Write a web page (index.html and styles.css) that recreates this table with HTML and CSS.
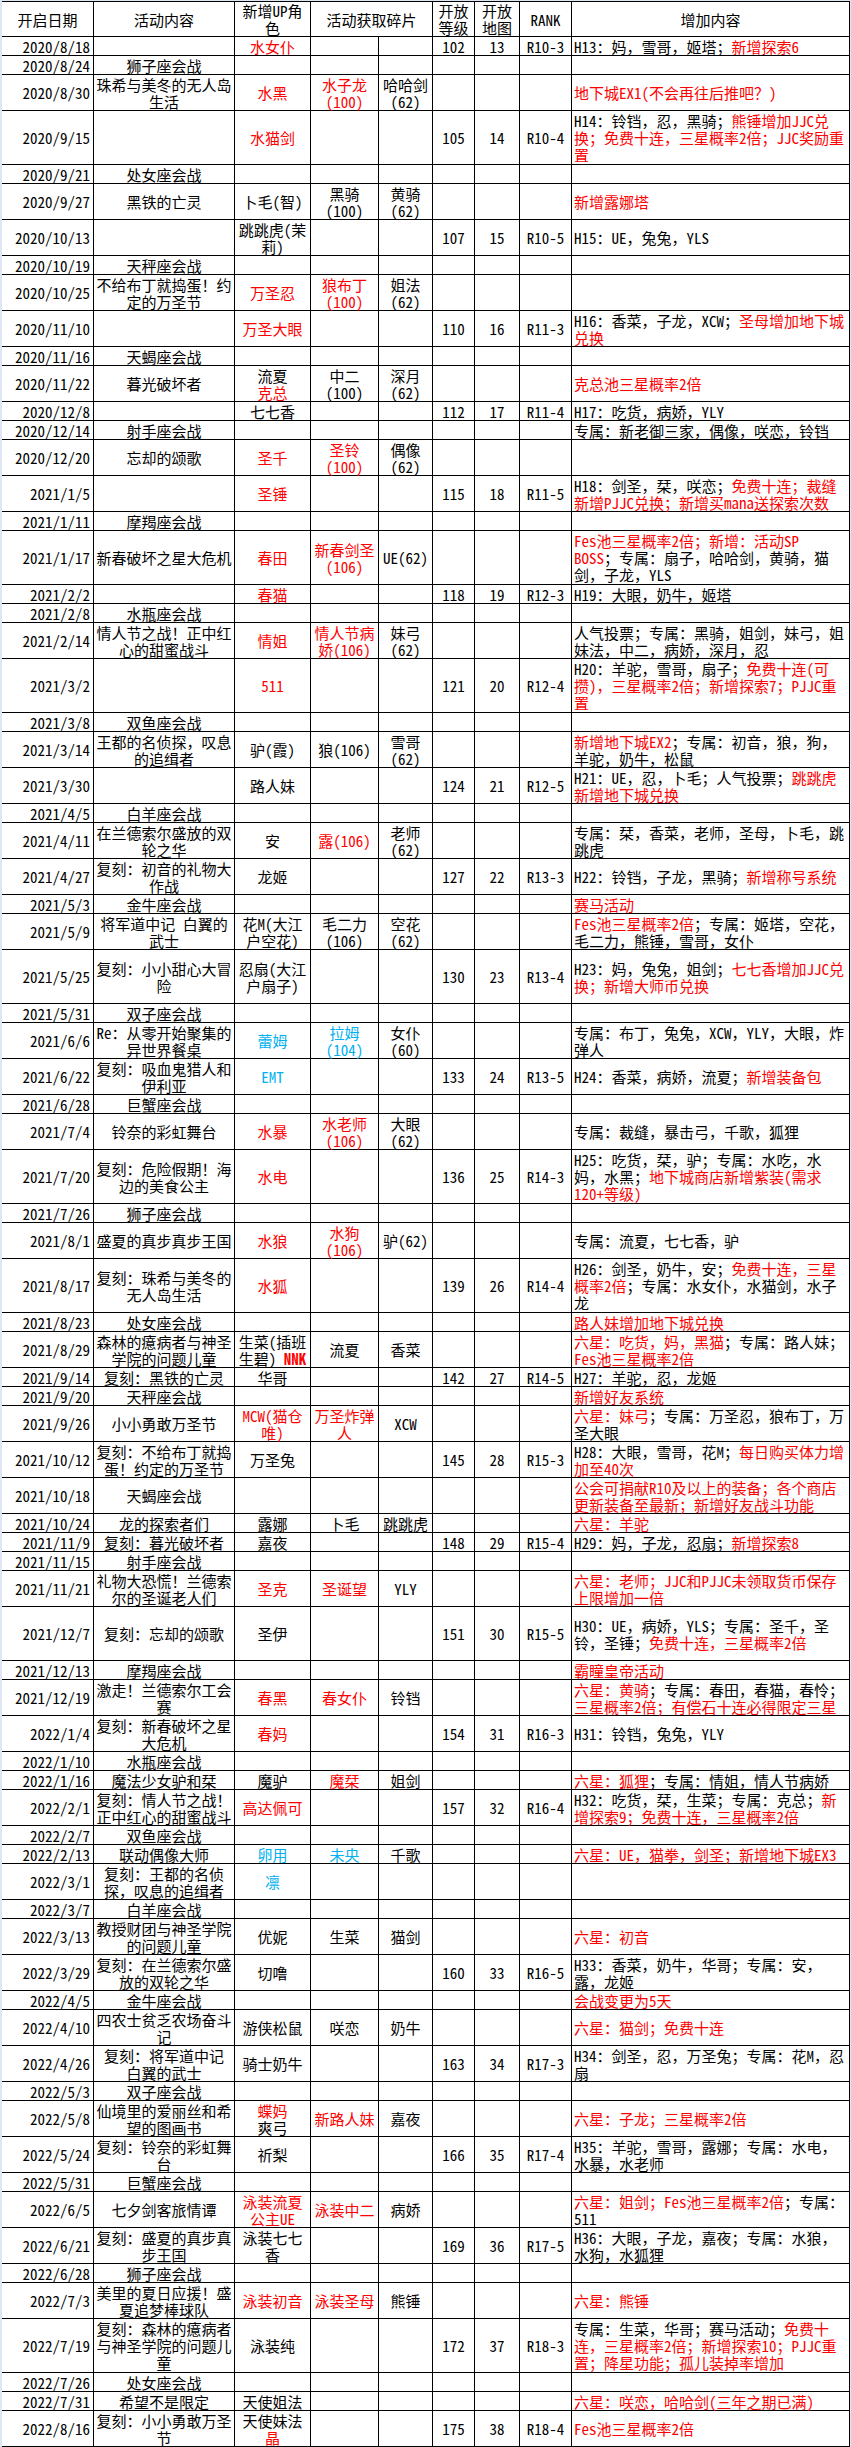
FILE: index.html
```html
<!DOCTYPE html>
<html lang="zh-CN">
<head>
<meta charset="utf-8">
<title>活动时间表</title>
<link rel="stylesheet" href="styles.css">
</head>
<body>
<table class="sheet">
<colgroup>
<col class="w1"><col class="w2"><col class="w3"><col class="w4"><col class="w5"><col class="w6"><col class="w7"><col class="w8"><col class="w9">
</colgroup>
<thead>
<tr class="hd">
<th>开启日期</th><th>活动内容</th><th>新增UP角<br>色</th><th colspan="2">活动获取碎片</th><th>开放<br>等级</th><th>开放<br>地图</th><th>RANK</th><th>增加内容</th>
</tr>
</thead>
<tbody>
<tr class="s"><td>2020/8/18</td><td></td><td><span class="r">水女仆</span></td><td></td><td></td><td>102</td><td>13</td><td>R10-3</td><td>H13：妈，雪哥，姬塔；<span class="r">新增探索6</span></td></tr>
<tr class="s"><td>2020/8/24</td><td>狮子座会战</td><td></td><td></td><td></td><td></td><td></td><td></td><td></td></tr>
<tr class="d"><td>2020/8/30</td><td>珠希与美冬的无人岛<br>生活</td><td><span class="r">水黑</span></td><td><span class="r">水子龙<br>(100)</span></td><td>哈哈剑<br>(62)</td><td></td><td></td><td></td><td><span class="r">地下城EX1(不会再往后推吧？)</span></td></tr>
<tr class="t"><td>2020/9/15</td><td></td><td><span class="r">水猫剑</span></td><td></td><td></td><td>105</td><td>14</td><td>R10-4</td><td>H14：铃铛，忍，黑骑；<span class="r">熊锤增加JJC兑<br>换；免费十连，三星概率2倍；JJC奖励重<br>置</span></td></tr>
<tr class="s"><td>2020/9/21</td><td>处女座会战</td><td></td><td></td><td></td><td></td><td></td><td></td><td></td></tr>
<tr class="d"><td>2020/9/27</td><td>黑铁的亡灵</td><td>卜毛(智)</td><td>黑骑<br>(100)</td><td>黄骑<br>(62)</td><td></td><td></td><td></td><td><span class="r">新增露娜塔</span></td></tr>
<tr class="d"><td>2020/10/13</td><td></td><td>跳跳虎(茉<br>莉)</td><td></td><td></td><td>107</td><td>15</td><td>R10-5</td><td>H15：UE，兔兔，YLS</td></tr>
<tr class="s"><td>2020/10/19</td><td>天秤座会战</td><td></td><td></td><td></td><td></td><td></td><td></td><td></td></tr>
<tr class="d"><td>2020/10/25</td><td>不给布丁就捣蛋！约<br>定的万圣节</td><td><span class="r">万圣忍</span></td><td><span class="r">狼布丁<br>(100)</span></td><td>姐法<br>(62)</td><td></td><td></td><td></td><td></td></tr>
<tr class="d"><td>2020/11/10</td><td></td><td><span class="r">万圣大眼</span></td><td></td><td></td><td>110</td><td>16</td><td>R11-3</td><td>H16：香菜，子龙，XCW；<span class="r">圣母增加地下城<br>兑换</span></td></tr>
<tr class="s"><td>2020/11/16</td><td>天蝎座会战</td><td></td><td></td><td></td><td></td><td></td><td></td><td></td></tr>
<tr class="d"><td>2020/11/22</td><td>暮光破坏者</td><td>流夏<br><span class="r">克总</span></td><td>中二<br>(100)</td><td>深月<br>(62)</td><td></td><td></td><td></td><td><span class="r">克总池三星概率2倍</span></td></tr>
<tr class="s"><td>2020/12/8</td><td></td><td>七七香</td><td></td><td></td><td>112</td><td>17</td><td>R11-4</td><td>H17：吃货，病娇，YLY</td></tr>
<tr class="s"><td>2020/12/14</td><td>射手座会战</td><td></td><td></td><td></td><td></td><td></td><td></td><td>专属：新老御三家，偶像，咲恋，铃铛</td></tr>
<tr class="d"><td>2020/12/20</td><td>忘却的颂歌</td><td><span class="r">圣千</span></td><td><span class="r">圣铃<br>(100)</span></td><td>偶像<br>(62)</td><td></td><td></td><td></td><td></td></tr>
<tr class="d"><td>2021/1/5</td><td></td><td><span class="r">圣锤</span></td><td></td><td></td><td>115</td><td>18</td><td>R11-5</td><td>H18：剑圣，栞，咲恋；<span class="r">免费十连；裁缝<br>新增PJJC兑换；新增买mana送探索次数</span></td></tr>
<tr class="s"><td>2021/1/11</td><td>摩羯座会战</td><td></td><td></td><td></td><td></td><td></td><td></td><td></td></tr>
<tr class="t"><td>2021/1/17</td><td>新春破坏之星大危机</td><td><span class="r">春田</span></td><td><span class="r">新春剑圣<br>(106)</span></td><td>UE(62)</td><td></td><td></td><td></td><td><span class="r">Fes池三星概率2倍；新增：活动SP<br>BOSS</span>；专属：扇子，哈哈剑，黄骑，猫<br>剑，子龙，YLS</td></tr>
<tr class="s"><td>2021/2/2</td><td></td><td><span class="r">春猫</span></td><td></td><td></td><td>118</td><td>19</td><td>R12-3</td><td>H19：大眼，奶牛，姬塔</td></tr>
<tr class="s"><td>2021/2/8</td><td>水瓶座会战</td><td></td><td></td><td></td><td></td><td></td><td></td><td></td></tr>
<tr class="d"><td>2021/2/14</td><td>情人节之战！正中红<br>心的甜蜜战斗</td><td><span class="r">情姐</span></td><td><span class="r">情人节病<br>娇(106)</span></td><td>妹弓<br>(62)</td><td></td><td></td><td></td><td>人气投票；专属：黑骑，姐剑，妹弓，姐<br>妹法，中二，病娇，深月，忍</td></tr>
<tr class="t"><td>2021/3/2</td><td></td><td><span class="r">511</span></td><td></td><td></td><td>121</td><td>20</td><td>R12-4</td><td>H20：羊驼，雪哥，扇子；<span class="r">免费十连(可<br>攒)，三星概率2倍；新增探索7；PJJC重<br>置</span></td></tr>
<tr class="s"><td>2021/3/8</td><td>双鱼座会战</td><td></td><td></td><td></td><td></td><td></td><td></td><td></td></tr>
<tr class="d"><td>2021/3/14</td><td>王都的名侦探，叹息<br>的追缉者</td><td>驴(霞)</td><td>狼(106)</td><td>雪哥<br>(62)</td><td></td><td></td><td></td><td><span class="r">新增地下城EX2</span>；专属：初音，狼，狗，<br>羊驼，奶牛，松鼠</td></tr>
<tr class="d"><td>2021/3/30</td><td></td><td>路人妹</td><td></td><td></td><td>124</td><td>21</td><td>R12-5</td><td>H21：UE，忍，卜毛；人气投票；<span class="r">跳跳虎<br>新增地下城兑换</span></td></tr>
<tr class="s"><td>2021/4/5</td><td>白羊座会战</td><td></td><td></td><td></td><td></td><td></td><td></td><td></td></tr>
<tr class="d"><td>2021/4/11</td><td>在兰德索尔盛放的双<br>轮之华</td><td>安</td><td><span class="r">露(106)</span></td><td>老师<br>(62)</td><td></td><td></td><td></td><td>专属：栞，香菜，老师，圣母，卜毛，跳<br>跳虎</td></tr>
<tr class="d"><td>2021/4/27</td><td>复刻：初音的礼物大<br>作战</td><td>龙姬</td><td></td><td></td><td>127</td><td>22</td><td>R13-3</td><td>H22：铃铛，子龙，黑骑；<span class="r">新增称号系统</span></td></tr>
<tr class="s"><td>2021/5/3</td><td>金牛座会战</td><td></td><td></td><td></td><td></td><td></td><td></td><td><span class="r">赛马活动</span></td></tr>
<tr class="d"><td>2021/5/9</td><td>将军道中记 白翼的<br>武士</td><td>花M(大江<br>户空花)</td><td>毛二力<br>(106)</td><td>空花<br>(62)</td><td></td><td></td><td></td><td><span class="r">Fes池三星概率2倍</span>；专属：姬塔，空花，<br>毛二力，熊锤，雪哥，女仆</td></tr>
<tr class="t"><td>2021/5/25</td><td>复刻：小小甜心大冒<br>险</td><td>忍扇(大江<br>户扇子)</td><td></td><td></td><td>130</td><td>23</td><td>R13-4</td><td>H23：妈，兔兔，姐剑；<span class="r">七七香增加JJC兑<br>换；新增大师币兑换</span></td></tr>
<tr class="s"><td>2021/5/31</td><td>双子座会战</td><td></td><td></td><td></td><td></td><td></td><td></td><td></td></tr>
<tr class="d"><td>2021/6/6</td><td>Re：从零开始聚集的<br>异世界餐桌</td><td><span class="b">蕾姆</span></td><td><span class="b">拉姆<br>(104)</span></td><td>女仆<br>(60)</td><td></td><td></td><td></td><td>专属：布丁，兔兔，XCW，YLY，大眼，炸<br>弹人</td></tr>
<tr class="d"><td>2021/6/22</td><td>复刻：吸血鬼猎人和<br>伊利亚</td><td><span class="b">EMT</span></td><td></td><td></td><td>133</td><td>24</td><td>R13-5</td><td>H24：香菜，病娇，流夏；<span class="r">新增装备包</span></td></tr>
<tr class="s"><td>2021/6/28</td><td>巨蟹座会战</td><td></td><td></td><td></td><td></td><td></td><td></td><td></td></tr>
<tr class="d"><td>2021/7/4</td><td>铃奈的彩虹舞台</td><td><span class="r">水暴</span></td><td><span class="r">水老师<br>(106)</span></td><td>大眼<br>(62)</td><td></td><td></td><td></td><td>专属：裁缝，暴击弓，千歌，狐狸</td></tr>
<tr class="t"><td>2021/7/20</td><td>复刻：危险假期！海<br>边的美食公主</td><td><span class="r">水电</span></td><td></td><td></td><td>136</td><td>25</td><td>R14-3</td><td>H25：吃货，栞，驴；专属：水吃，水<br>妈，水黑；<span class="r">地下城商店新增紫装(需求<br>120+等级)</span></td></tr>
<tr class="s"><td>2021/7/26</td><td>狮子座会战</td><td></td><td></td><td></td><td></td><td></td><td></td><td></td></tr>
<tr class="d"><td>2021/8/1</td><td>盛夏的真步真步王国</td><td><span class="r">水狼</span></td><td><span class="r">水狗<br>(106)</span></td><td>驴(62)</td><td></td><td></td><td></td><td>专属：流夏，七七香，驴</td></tr>
<tr class="t"><td>2021/8/17</td><td>复刻：珠希与美冬的<br>无人岛生活</td><td><span class="r">水狐</span></td><td></td><td></td><td>139</td><td>26</td><td>R14-4</td><td>H26：剑圣，奶牛，安；<span class="r">免费十连，三星<br>概率2倍</span>；专属：水女仆，水猫剑，水子<br>龙</td></tr>
<tr class="s"><td>2021/8/23</td><td>处女座会战</td><td></td><td></td><td></td><td></td><td></td><td></td><td><span class="r">路人妹增加地下城兑换</span></td></tr>
<tr class="d"><td>2021/8/29</td><td>森林的癔病者与神圣<br>学院的问题儿童</td><td>生菜(插班<br>生碧) <span class="r nb">NNK</span></td><td>流夏</td><td>香菜</td><td></td><td></td><td></td><td><span class="r">六星：吃货，妈，黑猫</span>；专属：路人妹；<br><span class="r">Fes池三星概率2倍</span></td></tr>
<tr class="s"><td>2021/9/14</td><td>复刻：黑铁的亡灵</td><td>华哥</td><td></td><td></td><td>142</td><td>27</td><td>R14-5</td><td>H27：羊驼，忍，龙姬</td></tr>
<tr class="s"><td>2021/9/20</td><td>天秤座会战</td><td></td><td></td><td></td><td></td><td></td><td></td><td><span class="r">新增好友系统</span></td></tr>
<tr class="d"><td>2021/9/26</td><td>小小勇敢万圣节</td><td><span class="r">MCW(猫仓<br>唯)</span></td><td><span class="r">万圣炸弹<br>人</span></td><td>XCW</td><td></td><td></td><td></td><td><span class="r">六星：妹弓</span>；专属：万圣忍，狼布丁，万<br>圣大眼</td></tr>
<tr class="d"><td>2021/10/12</td><td>复刻：不给布丁就捣<br>蛋！约定的万圣节</td><td>万圣兔</td><td></td><td></td><td>145</td><td>28</td><td>R15-3</td><td>H28：大眼，雪哥，花M；<span class="r">每日购买体力增<br>加至40次</span></td></tr>
<tr class="d"><td>2021/10/18</td><td>天蝎座会战</td><td></td><td></td><td></td><td></td><td></td><td></td><td><span class="r">公会可捐献R10及以上的装备；各个商店<br>更新装备至最新；新增好友战斗功能</span></td></tr>
<tr class="s"><td>2021/10/24</td><td>龙的探索者们</td><td>露娜</td><td>卜毛</td><td>跳跳虎</td><td></td><td></td><td></td><td><span class="r">六星：羊驼</span></td></tr>
<tr class="s"><td>2021/11/9</td><td>复刻：暮光破坏者</td><td>嘉夜</td><td></td><td></td><td>148</td><td>29</td><td>R15-4</td><td>H29：妈，子龙，忍扇；<span class="r">新增探索8</span></td></tr>
<tr class="s"><td>2021/11/15</td><td>射手座会战</td><td></td><td></td><td></td><td></td><td></td><td></td><td></td></tr>
<tr class="d"><td>2021/11/21</td><td>礼物大恐慌！兰德索<br>尔的圣诞老人们</td><td><span class="r">圣克</span></td><td><span class="r">圣诞望</span></td><td>YLY</td><td></td><td></td><td></td><td><span class="r">六星：老师；JJC和PJJC未领取货币保存<br>上限增加一倍</span></td></tr>
<tr class="t"><td>2021/12/7</td><td>复刻：忘却的颂歌</td><td>圣伊</td><td></td><td></td><td>151</td><td>30</td><td>R15-5</td><td>H30：UE，病娇，YLS；专属：圣千，圣<br>铃，圣锤；<span class="r">免费十连，三星概率2倍</span></td></tr>
<tr class="s"><td>2021/12/13</td><td>摩羯座会战</td><td></td><td></td><td></td><td></td><td></td><td></td><td><span class="r">霸瞳皇帝活动</span></td></tr>
<tr class="d"><td>2021/12/19</td><td>激走！兰德索尔工会<br>赛</td><td><span class="r">春黑</span></td><td><span class="r">春女仆</span></td><td>铃铛</td><td></td><td></td><td></td><td><span class="r">六星：黄骑</span>；专属：春田，春猫，春怜；<br><span class="r">三星概率2倍；有偿石十连必得限定三星</span></td></tr>
<tr class="d"><td>2022/1/4</td><td>复刻：新春破坏之星<br>大危机</td><td><span class="r">春妈</span></td><td></td><td></td><td>154</td><td>31</td><td>R16-3</td><td>H31：铃铛，兔兔，YLY</td></tr>
<tr class="s"><td>2022/1/10</td><td>水瓶座会战</td><td></td><td></td><td></td><td></td><td></td><td></td><td></td></tr>
<tr class="s"><td>2022/1/16</td><td>魔法少女驴和栞</td><td>魔驴</td><td><span class="r">魔栞</span></td><td>姐剑</td><td></td><td></td><td></td><td><span class="r">六星：狐狸</span>；专属：情姐，情人节病娇</td></tr>
<tr class="d"><td>2022/2/1</td><td>复刻：情人节之战！<br>正中红心的甜蜜战斗</td><td><span class="r">高达佩可</span></td><td></td><td></td><td>157</td><td>32</td><td>R16-4</td><td>H32：吃货，栞，生菜；专属：克总；<span class="r">新<br>增探索9；免费十连，三星概率2倍</span></td></tr>
<tr class="s"><td>2022/2/7</td><td>双鱼座会战</td><td></td><td></td><td></td><td></td><td></td><td></td><td></td></tr>
<tr class="s"><td>2022/2/13</td><td>联动偶像大师</td><td><span class="b">卵用</span></td><td><span class="b">未央</span></td><td>千歌</td><td></td><td></td><td></td><td><span class="r">六星：UE，猫拳，剑圣；新增地下城EX3</span></td></tr>
<tr class="d"><td>2022/3/1</td><td>复刻：王都的名侦<br>探，叹息的追缉者</td><td><span class="b">凛</span></td><td></td><td></td><td></td><td></td><td></td><td></td></tr>
<tr class="s"><td>2022/3/7</td><td>白羊座会战</td><td></td><td></td><td></td><td></td><td></td><td></td><td></td></tr>
<tr class="d"><td>2022/3/13</td><td>教授财团与神圣学院<br>的问题儿童</td><td>优妮</td><td>生菜</td><td>猫剑</td><td></td><td></td><td></td><td><span class="r">六星：初音</span></td></tr>
<tr class="d"><td>2022/3/29</td><td>复刻：在兰德索尔盛<br>放的双轮之华</td><td>切噜</td><td></td><td></td><td>160</td><td>33</td><td>R16-5</td><td>H33：香菜，奶牛，华哥；专属：安，<br>露，龙姬</td></tr>
<tr class="s"><td>2022/4/5</td><td>金牛座会战</td><td></td><td></td><td></td><td></td><td></td><td></td><td><span class="r">会战变更为5天</span></td></tr>
<tr class="d"><td>2022/4/10</td><td>四农士贫乏农场奋斗<br>记</td><td>游侠松鼠</td><td>咲恋</td><td>奶牛</td><td></td><td></td><td></td><td><span class="r">六星：猫剑；免费十连</span></td></tr>
<tr class="d"><td>2022/4/26</td><td>复刻：将军道中记<br>白翼的武士</td><td>骑士奶牛</td><td></td><td></td><td>163</td><td>34</td><td>R17-3</td><td>H34：剑圣，忍，万圣兔；专属：花M，忍<br>扇</td></tr>
<tr class="s"><td>2022/5/3</td><td>双子座会战</td><td></td><td></td><td></td><td></td><td></td><td></td><td></td></tr>
<tr class="d"><td>2022/5/8</td><td>仙境里的爱丽丝和希<br>望的图画书</td><td><span class="r">蝶妈</span><br>爽弓</td><td><span class="r">新路人妹</span></td><td>嘉夜</td><td></td><td></td><td></td><td><span class="r">六星：子龙；三星概率2倍</span></td></tr>
<tr class="d"><td>2022/5/24</td><td>复刻：铃奈的彩虹舞<br>台</td><td>祈梨</td><td></td><td></td><td>166</td><td>35</td><td>R17-4</td><td>H35：羊驼，雪哥，露娜；专属：水电，<br>水暴，水老师</td></tr>
<tr class="s"><td>2022/5/31</td><td>巨蟹座会战</td><td></td><td></td><td></td><td></td><td></td><td></td><td></td></tr>
<tr class="d"><td>2022/6/5</td><td>七夕剑客旅情谭</td><td><span class="r">泳装流夏<br>公主UE</span></td><td><span class="r">泳装中二</span></td><td>病娇</td><td></td><td></td><td></td><td><span class="r">六星：姐剑；Fes池三星概率2倍</span>；专属：<br>511</td></tr>
<tr class="d"><td>2022/6/21</td><td>复刻：盛夏的真步真<br>步王国</td><td>泳装七七<br>香</td><td></td><td></td><td>169</td><td>36</td><td>R17-5</td><td>H36：大眼，子龙，嘉夜；专属：水狼，<br>水狗，水狐狸</td></tr>
<tr class="s"><td>2022/6/28</td><td>狮子座会战</td><td></td><td></td><td></td><td></td><td></td><td></td><td></td></tr>
<tr class="d"><td>2022/7/3</td><td>美里的夏日应援！盛<br>夏追梦棒球队</td><td><span class="r">泳装初音</span></td><td><span class="r">泳装圣母</span></td><td>熊锤</td><td></td><td></td><td></td><td><span class="r">六星：熊锤</span></td></tr>
<tr class="t"><td>2022/7/19</td><td>复刻：森林的癔病者<br>与神圣学院的问题儿<br>童</td><td>泳装纯</td><td></td><td></td><td>172</td><td>37</td><td>R18-3</td><td>专属：生菜，华哥；赛马活动；<span class="r">免费十<br>连，三星概率2倍；新增探索10；PJJC重<br>置；降星功能；孤儿装掉率增加</span></td></tr>
<tr class="s"><td>2022/7/26</td><td>处女座会战</td><td></td><td></td><td></td><td></td><td></td><td></td><td></td></tr>
<tr class="s"><td>2022/7/31</td><td>希望不是限定</td><td>天使姐法</td><td></td><td></td><td></td><td></td><td></td><td><span class="r">六星：咲恋，哈哈剑(三年之期已满)</span></td></tr>
<tr class="d"><td>2022/8/16</td><td>复刻：小小勇敢万圣<br>节</td><td>天使妹法<br><span class="r">晶</span></td><td></td><td></td><td>175</td><td>38</td><td>R18-4</td><td><span class="r">Fes池三星概率2倍</span></td></tr>
</tbody>
</table>
</body>
</html>
```

FILE: styles.css
```css
html, body {
  margin: 0;
  padding: 0;
  background: #dde7f3;
}
body {
  padding: 1px 0 0 2px;
  font-family: "Noto Sans Mono CJK SC", "Noto Sans CJK SC", sans-serif;
  font-size: 15px;
  line-height: 17px;
  color: #000;
}
.sheet {
  border-collapse: separate;
  border-spacing: 0;
  table-layout: fixed;
  width: 848px;
  background: #fff;
  border-top: 1px solid #000;
}
.w1 { width: 92px; }
.w2 { width: 141px; }
.w3 { width: 76px; }
.w4 { width: 68px; }
.w5 { width: 54px; }
.w6 { width: 42px; }
.w7 { width: 45px; }
.w8 { width: 52px; }
.w9 { width: 278px; }
.sheet th,
.sheet td {
  padding: 0;
  border-right: 1px solid #000;
  border-bottom: 1px solid #000;
  vertical-align: middle;
  text-align: center;
  white-space: nowrap;
  font-weight: normal;
}
.hd { height: 35px; }
.s { height: 19px; }
.d { height: 36px; }
.t { height: 54px; }
.sheet td:first-child {
  text-align: right;
  padding-right: 3px;
}
.sheet td:last-child {
  text-align: left;
  padding-left: 2px;
}
.r { color: #ff0000; }
.b { color: #00b0f0; }
.nb { font-weight: bold; }
```
